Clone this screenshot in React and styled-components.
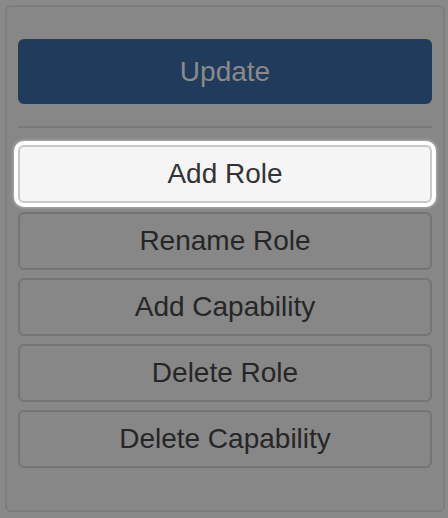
import styled, { createGlobalStyle } from 'styled-components';

const GlobalStyle = createGlobalStyle`
  html, body {
    margin: 0;
    padding: 0;
    background: #898989;
    font-family: "Liberation Sans", Arial, sans-serif;
  }
`;

const actions = ['Rename Role', 'Add Capability', 'Delete Role', 'Delete Capability'];

const App = () => {
  return (
    <>
      <GlobalStyle />
      <Panel>
        <UpdateButton type="button">Update</UpdateButton>
        <Divider />
        <ActionButton type="button" $active>Add Role</ActionButton>
        {actions.map((label) => (
          <ActionButton type="button" key={label}>{label}</ActionButton>
        ))}
      </Panel>
    </>
  );
};

const Panel = styled.div`
  box-sizing: border-box;
  width: 440px;
  margin: 5px 0 0 5px;
  padding: 32px 11px 42px;
  border: 2px solid #7d7d7d;
  border-radius: 6px;
  background: #878787;
  display: flex;
  flex-direction: column;
`;

const UpdateButton = styled.button`
  box-sizing: border-box;
  height: 65px;
  border: none;
  border-radius: 6px;
  background: #203b5b;
  color: #8a8a8a;
  font-family: inherit;
  font-size: 28px;
  padding: 0;
`;

const Divider = styled.div`
  height: 2px;
  margin: 22px 0 17px;
  background: #797979;
`;

const ActionButton = styled.button`
  box-sizing: border-box;
  height: 58px;
  margin-top: ${(p) => (p.$active ? '0' : '8px')};
  margin-bottom: ${(p) => (p.$active ? '1px' : '0')};
  padding: 0;
  border: 2px solid ${(p) => (p.$active ? '#c9c9c9' : '#747474')};
  border-radius: 6px;
  background: ${(p) => (p.$active ? '#f5f5f5' : 'transparent')};
  color: ${(p) => (p.$active ? '#333333' : '#262626')};
  font-family: inherit;
  font-size: 28px;
  box-shadow: ${(p) =>
    p.$active ? '0 0 0 4px #ffffff, 0 0 3px 5px rgba(255, 255, 255, 0.35)' : 'none'};
  position: relative;
  z-index: ${(p) => (p.$active ? 1 : 0)};
`;

export default App;
